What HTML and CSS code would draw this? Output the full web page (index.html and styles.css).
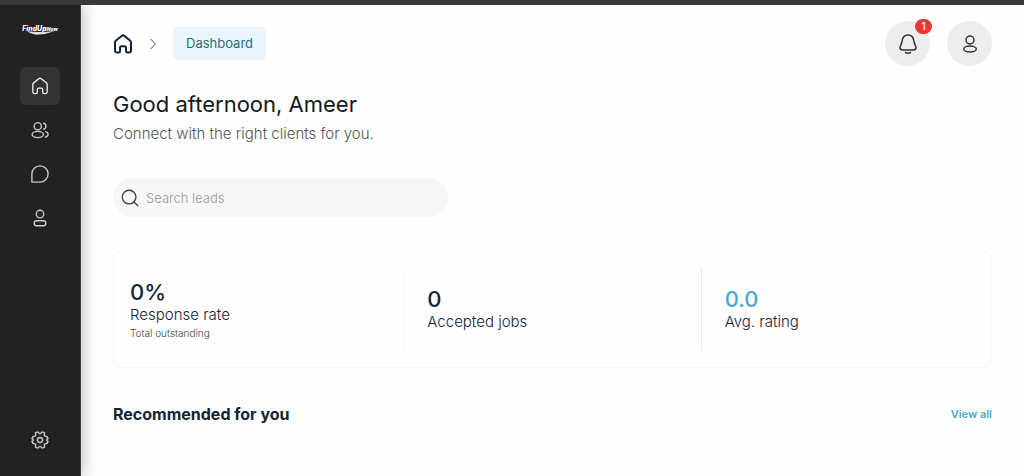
FILE: index.html
```html
<!DOCTYPE html>
<html lang="en">

<head>
    <meta charset="UTF-8">
    <meta name="viewport" content="width=device-width, initial-scale=1.0">
    <title>Dashboard</title>
    <link rel="stylesheet" href="styles.css">
</head>

<body>
    <!-- shared icons -->
    <svg class="sprite" aria-hidden="true">
        <symbol id="icon-home" viewBox="0 0 20 20">
            <path d="M2 8.5Q2 7.3 3 6.5L8.6 1.9Q10 .8 11.4 1.9L17 6.5Q18 7.3 18 8.5V16.5Q18 18.5 16 18.5H14.5Q13 18.5 13 17V14Q13 12.3 11.5 12.3H8.5Q7 12.3 7 14V17Q7 18.5 5.5 18.5H4Q2 18.5 2 16.5Z" />
        </symbol>
        <symbol id="icon-user" viewBox="0 0 20 20">
            <circle cx="10" cy="6" r="4" />
            <ellipse cx="10" cy="15" rx="6.3" ry="3" />
        </symbol>
    </svg>

    <div class="topbar"></div>
    <div class="layout">
        <aside class="sidebar">
            <a href="#" class="logo" aria-label="FindUp Now">
                <span class="logo-text">FindUp<small>Now</small></span>
                <svg class="logo-swoosh" viewBox="0 0 34 4"><path d="M4 0Q14 2 32 0Q22 4 12 3.6Q7 3 4 0Z" /></svg>
            </a>
            <nav class="menu">
                <a href="#" class="menu-item active" aria-label="Home">
                    <svg class="icon"><use href="#icon-home" /></svg>
                </a>
                <a href="#" class="menu-item" aria-label="Leads">
                    <svg class="icon" viewBox="0 0 20 20">
                        <circle cx="7.5" cy="5.8" r="4" />
                        <ellipse cx="7.5" cy="15" rx="6.3" ry="3.5" />
                        <path d="M14 2.5A3.4 3.4 0 0 1 14 9.1M16.3 11.8Q19 12.6 19 14.8T16 18" />
                    </svg>
                </a>
                <a href="#" class="menu-item" aria-label="Messages">
                    <svg class="icon" viewBox="0 0 20 20">
                        <path d="M1 19V10A9 9 0 1 1 10 19Z" />
                    </svg>
                </a>
                <a href="#" class="menu-item" aria-label="Profile">
                    <svg class="icon" viewBox="0 0 20 20">
                        <circle cx="10" cy="5.6" r="4.2" />
                        <rect x="3.6" y="13" width="12.8" height="5.6" rx="2.6" />
                    </svg>
                </a>
            </nav>
            <a href="#" class="menu-item" aria-label="Settings">
                <svg class="icon" viewBox="0 0 20 20">
                    <path d="M6.6 1.2H8Q8.8 3 10 3T12 1.2H13.4L15.2 2.2Q14.4 4.2 15 5.2T17.6 6L19 8.4Q17.4 9 17.4 10T19 11.6L17.6 14Q15.6 13.8 15 14.8T15.2 17.8L13.4 18.8H12Q11.2 17 10 17T8 18.8H6.6L4.8 17.8Q5.6 15.8 5 14.8T2.4 14L1 11.6Q2.6 11 2.6 10T1 8.4L2.4 6Q4.4 6.2 5 5.2T4.8 2.2Z" />
                    <circle cx="10" cy="10" r="2.8" />
                </svg>
            </a>
        </aside>

        <main class="content">
            <header class="header">
                <nav class="breadcrumb" aria-label="Breadcrumb">
                    <a href="#" class="crumb-home" aria-label="Home">
                        <svg class="icon"><use href="#icon-home" /></svg>
                    </a>
                    <svg class="chevron" viewBox="0 0 6 12"><path d="M.7 1L5.3 6L.7 11" /></svg>
                    <a href="#" class="crumb">Dashboard</a>
                </nav>
                <div class="actions">
                    <button type="button" class="round-btn" aria-label="Notifications">
                        <svg class="icon" viewBox="0 0 20 20">
                            <path d="M10 1C6 1 4.4 4 4 7.3C3.7 10 2 11.8 2 13.8Q2 16 4.5 16H15.5Q18 16 18 13.8C18 11.8 16.3 10 16 7.3C15.6 4 14 1 10 1Z" />
                            <path d="M7.5 18.5Q10 20 12.5 18.5" />
                        </svg>
                        <span class="badge">1</span>
                    </button>
                    <button type="button" class="round-btn" aria-label="Account">
                        <svg class="icon"><use href="#icon-user" /></svg>
                    </button>
                </div>
            </header>

            <h1>Good afternoon, Ameer</h1>
            <p class="subtitle">Connect with the right clients for you.</p>

            <form class="search">
                <svg class="icon" viewBox="0 0 20 20">
                    <circle cx="9" cy="9" r="7.6" />
                    <path d="M14.5 14.5L18.6 18.6" />
                </svg>
                <input type="search" placeholder="Search leads" aria-label="Search leads">
            </form>

            <section class="stats">
                <div class="stat">
                    <div class="stat-value">0%</div>
                    <div class="stat-label">Response rate</div>
                    <div class="stat-note">Total outstanding</div>
                </div>
                <div class="divider light"></div>
                <div class="stat">
                    <div class="stat-value">0</div>
                    <div class="stat-label">Accepted jobs</div>
                </div>
                <div class="divider"></div>
                <div class="stat">
                    <div class="stat-value blue">0.0</div>
                    <div class="stat-label">Avg. rating</div>
                </div>
            </section>

            <div class="section-head">
                <h2>Recommended for you</h2>
                <a href="#">View all</a>
            </div>
        </main>
    </div>
</body>

</html>
```
FILE: styles.css
```css
* {
    box-sizing: border-box;
}

body {
    font-family: Inter, "Liberation Sans", sans-serif;
    display: flex;
    flex-direction: column;
    min-height: 100vh;
    margin: 0;
    background: #fefefe;
    color: #132436;
}

a {
    text-decoration: none;
}

.sprite {
    display: none;
}

.topbar {
    height: 5px;
    background: #3a3a3a;
}

.layout {
    display: flex;
    flex: 1;
}

.icon {
    width: 18px;
    height: 18px;
    fill: none;
    stroke: currentColor;
    stroke-width: 1.5;
    stroke-linecap: round;
    stroke-linejoin: round;
}

/* sidebar */
.sidebar {
    display: flex;
    flex-direction: column;
    align-items: center;
    flex-shrink: 0;
    width: 81px;
    padding: 18px 0 17px;
    border-right: 1px solid #3c4248;
    background: #222;
    box-shadow: 2px 0 14px rgba(30, 50, 70, 0.3);
}

.logo {
    display: flex;
    flex-direction: column;
    align-items: center;
    height: 44px;
    color: #fff;
}

.logo-text {
    font-size: 7px;
    line-height: 12px;
    font-weight: 800;
    font-style: italic;
}

.logo-text small {
    font-size: 5px;
}

.logo-swoosh {
    width: 34px;
    height: 4px;
    margin-top: -4px;
    fill: #ddd;
}

.menu {
    display: flex;
    flex-direction: column;
    gap: 6px;
    margin-bottom: auto;
}

.menu-item {
    display: flex;
    align-items: center;
    justify-content: center;
    width: 40px;
    height: 38px;
    border-radius: 6px;
    color: #ccc;
}

.menu-item.active {
    background: #333;
    color: #eee;
}

/* main */
.content {
    flex: 1;
    padding: 16px 32px 32px;
}

.header {
    display: flex;
    align-items: center;
    justify-content: space-between;
    margin-bottom: 24px;
}

.breadcrumb {
    display: flex;
    align-items: center;
    gap: 17px;
}

.crumb-home {
    display: flex;
    color: #132436;
}

.crumb-home .icon {
    width: 20px;
    height: 20px;
    stroke-width: 2;
}

.chevron {
    width: 6px;
    height: 12px;
    fill: none;
    stroke: #555;
}

.crumb {
    padding: 0 13px;
    border-radius: 5px;
    background: #eaf6fb;
    color: #26707e;
    font-size: 13px;
    line-height: 33px;
}

.actions {
    display: flex;
    gap: 17px;
}

.round-btn {
    position: relative;
    display: flex;
    align-items: center;
    justify-content: center;
    width: 45px;
    height: 45px;
    padding: 0;
    border: none;
    border-radius: 50%;
    background: #ededed;
    color: #333;
    font-family: inherit;
    cursor: pointer;
}

.round-btn .icon {
    width: 20px;
    height: 20px;
}

.badge {
    position: absolute;
    top: -2px;
    right: -2px;
    width: 17px;
    border-radius: 8px;
    background: #f0372f;
    color: #fff;
    font-size: 10px;
    line-height: 15px;
    font-weight: 500;
}

h1 {
    margin: 0 0 6px;
    color: #111a20;
    font-size: 22px;
    line-height: 28px;
    font-weight: 400;
}

.subtitle {
    margin: 0 0 34px;
    color: #555;
    font-size: 15px;
    line-height: 20px;
    font-weight: 300;
}

.search {
    display: flex;
    align-items: center;
    gap: 7px;
    width: 335px;
    max-width: 100%;
    height: 39px;
    margin-bottom: 34px;
    padding: 0 8px;
    border-radius: 20px;
    background: #f7f7f7;
    color: #444;
}

.search input {
    flex: 1;
    min-width: 0;
    padding: 0;
    border: none;
    outline: none;
    background: transparent;
    font-family: inherit;
    font-size: 13px;
    font-weight: 300;
}

.search input::placeholder {
    color: #999;
}

.stats {
    display: flex;
    align-items: center;
    gap: 23px;
    min-height: 117px;
    margin-bottom: 34px;
    padding: 16px;
    border: 1px solid #f6f6f6;
    border-radius: 8px;
}

.stat {
    flex: 1;
}

.stat-value {
    font-size: 22px;
    line-height: 24px;
    font-weight: 500;
}

.stat-value.blue {
    color: #4ba9cb;
}

.stat-label {
    font-size: 15px;
    line-height: 22px;
    font-weight: 300;
}

.stat-note {
    color: #444;
    font-size: 10px;
    line-height: 14px;
    font-weight: 300;
}

.divider {
    align-self: stretch;
    width: 1px;
    background: #e9e9e9;
}

.divider.light {
    background: #fafafa;
}

.section-head {
    display: flex;
    align-items: center;
    justify-content: space-between;
}

h2 {
    margin: 0;
    font-size: 16px;
    line-height: 24px;
    font-weight: 700;
}

.section-head a {
    color: #4ba9cb;
    font-size: 11px;
    font-weight: 600;
}
```
